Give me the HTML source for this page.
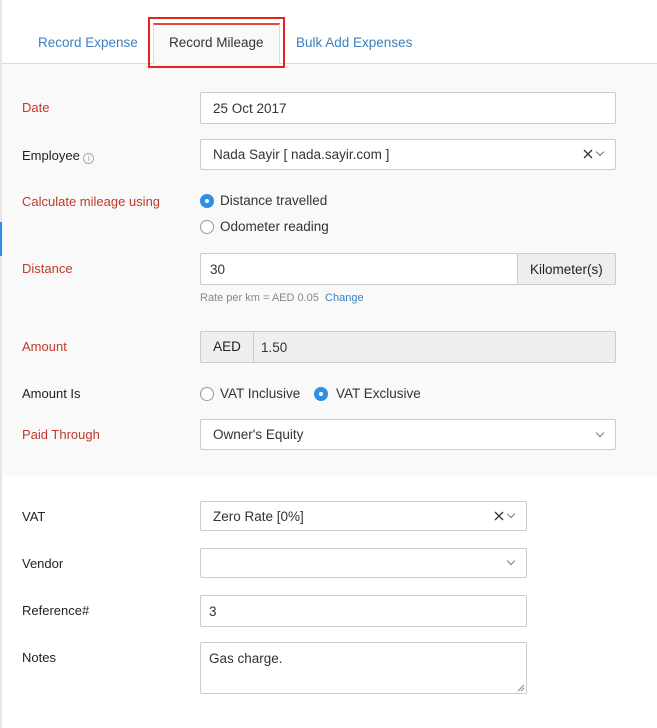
<!DOCTYPE html>
<html><head><style>
*{box-sizing:border-box;margin:0;padding:0}
body{width:657px;height:728px;background:#fff;font-family:"Liberation Sans",sans-serif;font-size:13px;color:#333;position:relative;overflow:hidden}
.a{position:absolute}
.lbl{position:absolute;left:22px;font-size:13px;color:#222}
.req{color:#c0392b}
.in{position:absolute;background:#fff;border:1px solid #ccc;border-radius:2px;padding-left:12px;font-size:13.5px;color:#333;display:flex;align-items:center}
.chev{position:absolute;width:6px;height:6px;border-right:1.3px solid #777;border-bottom:1.3px solid #777;transform:rotate(45deg)}
.rad{position:absolute;width:14px;height:14px;border-radius:50%;border:1px solid #999;background:#fff}
.rad.on{background:#2f8fe6;border-color:#2f8fe6}
.rad.on:after{content:"";position:absolute;left:4px;top:4px;width:4px;height:4px;border-radius:50%;background:#fff}
.rt{position:absolute;font-size:13.5px;color:#333}
</style></head><body>
<div class="a" style="left:0;top:0;width:2px;height:728px;background:#e6e6e6"></div>
<div class="a" style="left:0;top:222px;width:2px;height:34px;background:#2f8fe6"></div>
<div class="a" style="left:2px;top:63px;width:655px;height:413px;background:#f9f9f9;border-top:1px solid #ddd"></div>
<div class="a" style="left:38px;top:35px;color:#3a7fc1;font-size:13.5px">Record Expense</div>
<div class="a" style="left:153px;top:23px;width:127px;height:41px;background:#f9f9f9;border:1px solid #ddd;border-bottom:none;border-top:2px solid #e04a3b"></div>
<div class="a" style="left:169px;top:35px;color:#333;font-size:13.5px">Record Mileage</div>
<div class="a" style="left:296px;top:35px;color:#3a7fc1;font-size:13.5px">Bulk Add Expenses</div>
<div class="a" style="left:148px;top:17px;width:137px;height:51px;border:2px solid #e8201f"></div>

<div class="lbl req" style="top:100px">Date</div>
<div class="in" style="left:200px;top:92px;width:416px;height:32px">25 Oct 2017</div>

<div class="lbl" style="top:148px">Employee <span style="display:inline-block;width:11px;height:11px;border:1px solid #aaa;border-radius:50%;font-size:8px;color:#999;text-align:center;line-height:9px;vertical-align:-1px">i</span></div>
<div class="in" style="left:200px;top:139px;width:416px;height:31px">Nada Sayir [ nada.sayir.com ]</div>
<svg class="a" style="left:583px;top:149px" width="10" height="10"><path d="M1 1L9 9M9 1L1 9" stroke="#333" stroke-width="1.3"/></svg>
<div class="chev" style="left:597px;top:149px"></div>

<div class="lbl req" style="top:194px">Calculate mileage using</div>
<div class="rad on" style="left:200px;top:194px"></div><div class="rt" style="left:220px;top:193px">Distance travelled</div>
<div class="rad" style="left:200px;top:220px"></div><div class="rt" style="left:220px;top:219px">Odometer reading</div>

<div class="lbl req" style="top:261px">Distance</div>
<div class="in" style="left:200px;top:253px;width:318px;height:32px;padding-left:9px">30</div>
<div class="in" style="left:517px;top:253px;width:99px;height:32px;background:#eee;padding-left:12px;color:#222">Kilometer(s)</div>
<div class="a" style="left:200px;top:292px;font-size:11px;color:#888">Rate per km = AED 0.05 &nbsp;<span style="color:#3a7fc1">Change</span></div>

<div class="lbl req" style="top:339px">Amount</div>
<div class="in" style="left:200px;top:331px;width:416px;height:32px;background:#efefef;padding-left:0"><span style="display:inline-block;width:53px;height:100%;border-right:1px solid #ccc;text-align:center;line-height:30px;color:#222">AED</span><span style="padding-left:7px">1.50</span></div>

<div class="lbl" style="top:386px">Amount Is</div>
<div class="rad" style="left:200px;top:387px"></div><div class="rt" style="left:220px;top:386px">VAT Inclusive</div>
<div class="rad on" style="left:314px;top:387px"></div><div class="rt" style="left:336px;top:386px">VAT Exclusive</div>

<div class="lbl req" style="top:427px">Paid Through</div>
<div class="in" style="left:200px;top:419px;width:416px;height:31px">Owner's Equity</div>
<div class="chev" style="left:597px;top:430px"></div>

<div class="lbl" style="top:509px">VAT</div>
<div class="in" style="left:200px;top:501px;width:327px;height:30px">Zero Rate [0%]</div>
<svg class="a" style="left:494px;top:511px" width="10" height="10"><path d="M1 1L9 9M9 1L1 9" stroke="#333" stroke-width="1.3"/></svg>
<div class="chev" style="left:508px;top:511px"></div>

<div class="lbl" style="top:556px">Vendor</div>
<div class="in" style="left:200px;top:548px;width:327px;height:30px"></div>
<div class="chev" style="left:508px;top:558px"></div>

<div class="lbl" style="top:603px">Reference#</div>
<div class="in" style="left:200px;top:595px;width:327px;height:32px;padding-left:8px">3</div>

<div class="lbl" style="top:650px">Notes</div>
<div class="in" style="left:200px;top:642px;width:327px;height:52px;padding-left:8px;align-items:flex-start;padding-top:8px">Gas charge.</div>
<svg class="a" style="left:517px;top:684px" width="8" height="8"><path d="M1 7L7 1M4 7L7 4" stroke="#888" stroke-width="1"/></svg>
</body></html>
